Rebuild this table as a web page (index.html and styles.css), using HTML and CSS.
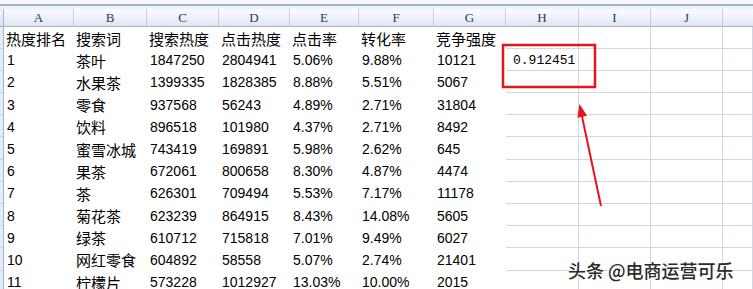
FILE: index.html
```html
<!DOCTYPE html>
<html lang="zh">
<head>
<meta charset="utf-8">
<title>Sheet</title>
<link rel="stylesheet" href="styles.css">
</head>
<body>
<div class="sheet">
  <div class="topbar"></div>
  <div class="grid">
    <div class="rh corner"></div>
    <div class="ch">A</div><div class="ch">B</div><div class="ch">C</div><div class="ch">D</div><div class="ch">E</div><div class="ch">F</div><div class="ch">G</div><div class="ch">H</div><div class="ch">I</div><div class="ch">J</div><div class="ch last"></div>

    <div class="rh"></div>
    <div class="c cjk">热度排名</div><div class="c cjk">搜索词</div><div class="c cjk">搜索热度</div><div class="c cjk">点击热度</div><div class="c cjk">点击率</div><div class="c cjk">转化率</div><div class="c cjk">竞争强度</div><div class="c g"></div><div class="c g"></div><div class="c g"></div><div class="c g"></div>

    <div class="rh"></div>
    <div class="c">1</div><div class="c cjk">茶叶</div><div class="c">1847250</div><div class="c">2804941</div><div class="c">5.06%</div><div class="c">9.88%</div><div class="c">10121</div><div class="c g mono">0.912451</div><div class="c g"></div><div class="c g"></div><div class="c g"></div>

    <div class="rh"></div>
    <div class="c">2</div><div class="c cjk">水果茶</div><div class="c">1399335</div><div class="c">1828385</div><div class="c">8.88%</div><div class="c">5.51%</div><div class="c">5067</div><div class="c g"></div><div class="c g"></div><div class="c g"></div><div class="c g"></div>

    <div class="rh"></div>
    <div class="c">3</div><div class="c cjk">零食</div><div class="c">937568</div><div class="c">56243</div><div class="c">4.89%</div><div class="c">2.71%</div><div class="c">31804</div><div class="c g"></div><div class="c g"></div><div class="c g"></div><div class="c g"></div>

    <div class="rh"></div>
    <div class="c">4</div><div class="c cjk">饮料</div><div class="c">896518</div><div class="c">101980</div><div class="c">4.37%</div><div class="c">2.71%</div><div class="c">8492</div><div class="c g"></div><div class="c g"></div><div class="c g"></div><div class="c g"></div>

    <div class="rh"></div>
    <div class="c">5</div><div class="c cjk">蜜雪冰城</div><div class="c">743419</div><div class="c">169891</div><div class="c">5.98%</div><div class="c">2.62%</div><div class="c">645</div><div class="c g"></div><div class="c g"></div><div class="c g"></div><div class="c g"></div>

    <div class="rh"></div>
    <div class="c">6</div><div class="c cjk">果茶</div><div class="c">672061</div><div class="c">800658</div><div class="c">8.30%</div><div class="c">4.87%</div><div class="c">4474</div><div class="c g"></div><div class="c g"></div><div class="c g"></div><div class="c g"></div>

    <div class="rh"></div>
    <div class="c">7</div><div class="c cjk">茶</div><div class="c">626301</div><div class="c">709494</div><div class="c">5.53%</div><div class="c">7.17%</div><div class="c">11178</div><div class="c g"></div><div class="c g"></div><div class="c g"></div><div class="c g"></div>

    <div class="rh"></div>
    <div class="c">8</div><div class="c cjk">菊花茶</div><div class="c">623239</div><div class="c">864915</div><div class="c">8.43%</div><div class="c">14.08%</div><div class="c">5605</div><div class="c g"></div><div class="c g"></div><div class="c g"></div><div class="c g"></div>

    <div class="rh"></div>
    <div class="c">9</div><div class="c cjk">绿茶</div><div class="c">610712</div><div class="c">715818</div><div class="c">7.01%</div><div class="c">9.49%</div><div class="c">6027</div><div class="c g"></div><div class="c g"></div><div class="c g"></div><div class="c g"></div>

    <div class="rh"></div>
    <div class="c">10</div><div class="c cjk">网红零食</div><div class="c">604892</div><div class="c">58558</div><div class="c">5.07%</div><div class="c">2.74%</div><div class="c">21401</div><div class="c g"></div><div class="c g"></div><div class="c g"></div><div class="c g"></div>

    <div class="rh"></div>
    <div class="c">11</div><div class="c cjk">柠檬片</div><div class="c">573228</div><div class="c">1012927</div><div class="c">13.03%</div><div class="c">10.00%</div><div class="c">2015</div><div class="c g"></div><div class="c g"></div><div class="c g"></div><div class="c g"></div>
  </div>

  <svg class="overlay" width="753" height="289" viewBox="0 0 753 289">
    <rect x="503" y="45" width="92" height="42" fill="none" stroke="#e3161f" stroke-width="2.5"/>
    <line x1="601" y1="206" x2="581.5" y2="114" stroke="#e3161f" stroke-width="2"/>
    <polygon points="579.5,104 587.1,115.7 577.3,117.7" fill="#e3161f"/>
  </svg>

  <div class="watermark">头条 @电商运营可乐</div>
</div>
</body>
</html>
```

FILE: styles.css
```css
html, body {
  margin: 0;
  padding: 0;
  background: #ffffff;
}

.sheet {
  position: relative;
  width: 753px;
  height: 289px;
  overflow: hidden;
  font-family: "Liberation Sans", "Noto Sans CJK SC", sans-serif;
  font-size: 14px;
  color: #000;
}

.topbar {
  height: 9px;
  background: linear-gradient(to bottom,
    #f4f6fa 0, #f4f6fa 4.5px,
    #9fb2cb 4.5px, #9fb2cb 6px,
    #eef2f8 6px, #eef2f8 9px);
}

.grid {
  display: grid;
  grid-template-columns: 4px 70px 73px 72px 71px 69px 75px 72px 73px 72px 72px 1fr;
  grid-template-rows: 17.5px;
  grid-auto-rows: 22.2px;
}

.rh {
  background: #e4ecf7;
  border-right: 1px solid #9eb6ce;
  border-bottom: 1px solid #c5d3e4;
  box-sizing: border-box;
}

.rh.corner {
  background: linear-gradient(to bottom, #eef3fa, #d6e0ee);
  border-bottom: 1px solid #9eb6ce;
}

.ch {
  box-sizing: border-box;
  background: linear-gradient(to bottom, #f9fbfd 0%, #eef2f8 50%, #dfe6f0 100%);
  border-right: 1px solid #c3cfdf;
  border-bottom: 1px solid #9eb6ce;
  display: flex;
  align-items: center;
  justify-content: center;
  font-family: "Liberation Serif", "DejaVu Serif", serif;
  font-size: 13px;
  color: #2a3a4e;
  padding-top: 1px;
}

.ch.last {
  border-right: none;
}

.c {
  box-sizing: border-box;
  display: flex;
  align-items: center;
  padding-left: 3px;
  padding-top: 1px;
  line-height: 16px;
  white-space: nowrap;
  background: #fff;
}

.c.cjk {
  font-family: "Noto Sans CJK SC", sans-serif;
  font-size: 15px;
  line-height: 17px;
  padding-left: 2px;
  padding-top: 1px;
}

.c.g {
  border-right: 1px solid #d0d7e5;
  border-bottom: 1px solid #d0d7e5;
}

.c.mono {
  font-family: "Liberation Mono", monospace;
  font-size: 13px;
  padding-left: 7px;
  padding-top: 4px;
}

.overlay {
  position: absolute;
  left: 0;
  top: 0;
  pointer-events: none;
}

.watermark {
  position: absolute;
  left: 568px;
  top: 257px;
  font-family: "Noto Sans CJK SC", sans-serif;
  font-size: 18px;
  font-weight: 500;
  color: #2b2b2b;
  white-space: nowrap;
  text-shadow: 0 0 2px #fff, 0 0 3px #fff, 1px 1px 1px rgba(255,255,255,0.9);
}
```
